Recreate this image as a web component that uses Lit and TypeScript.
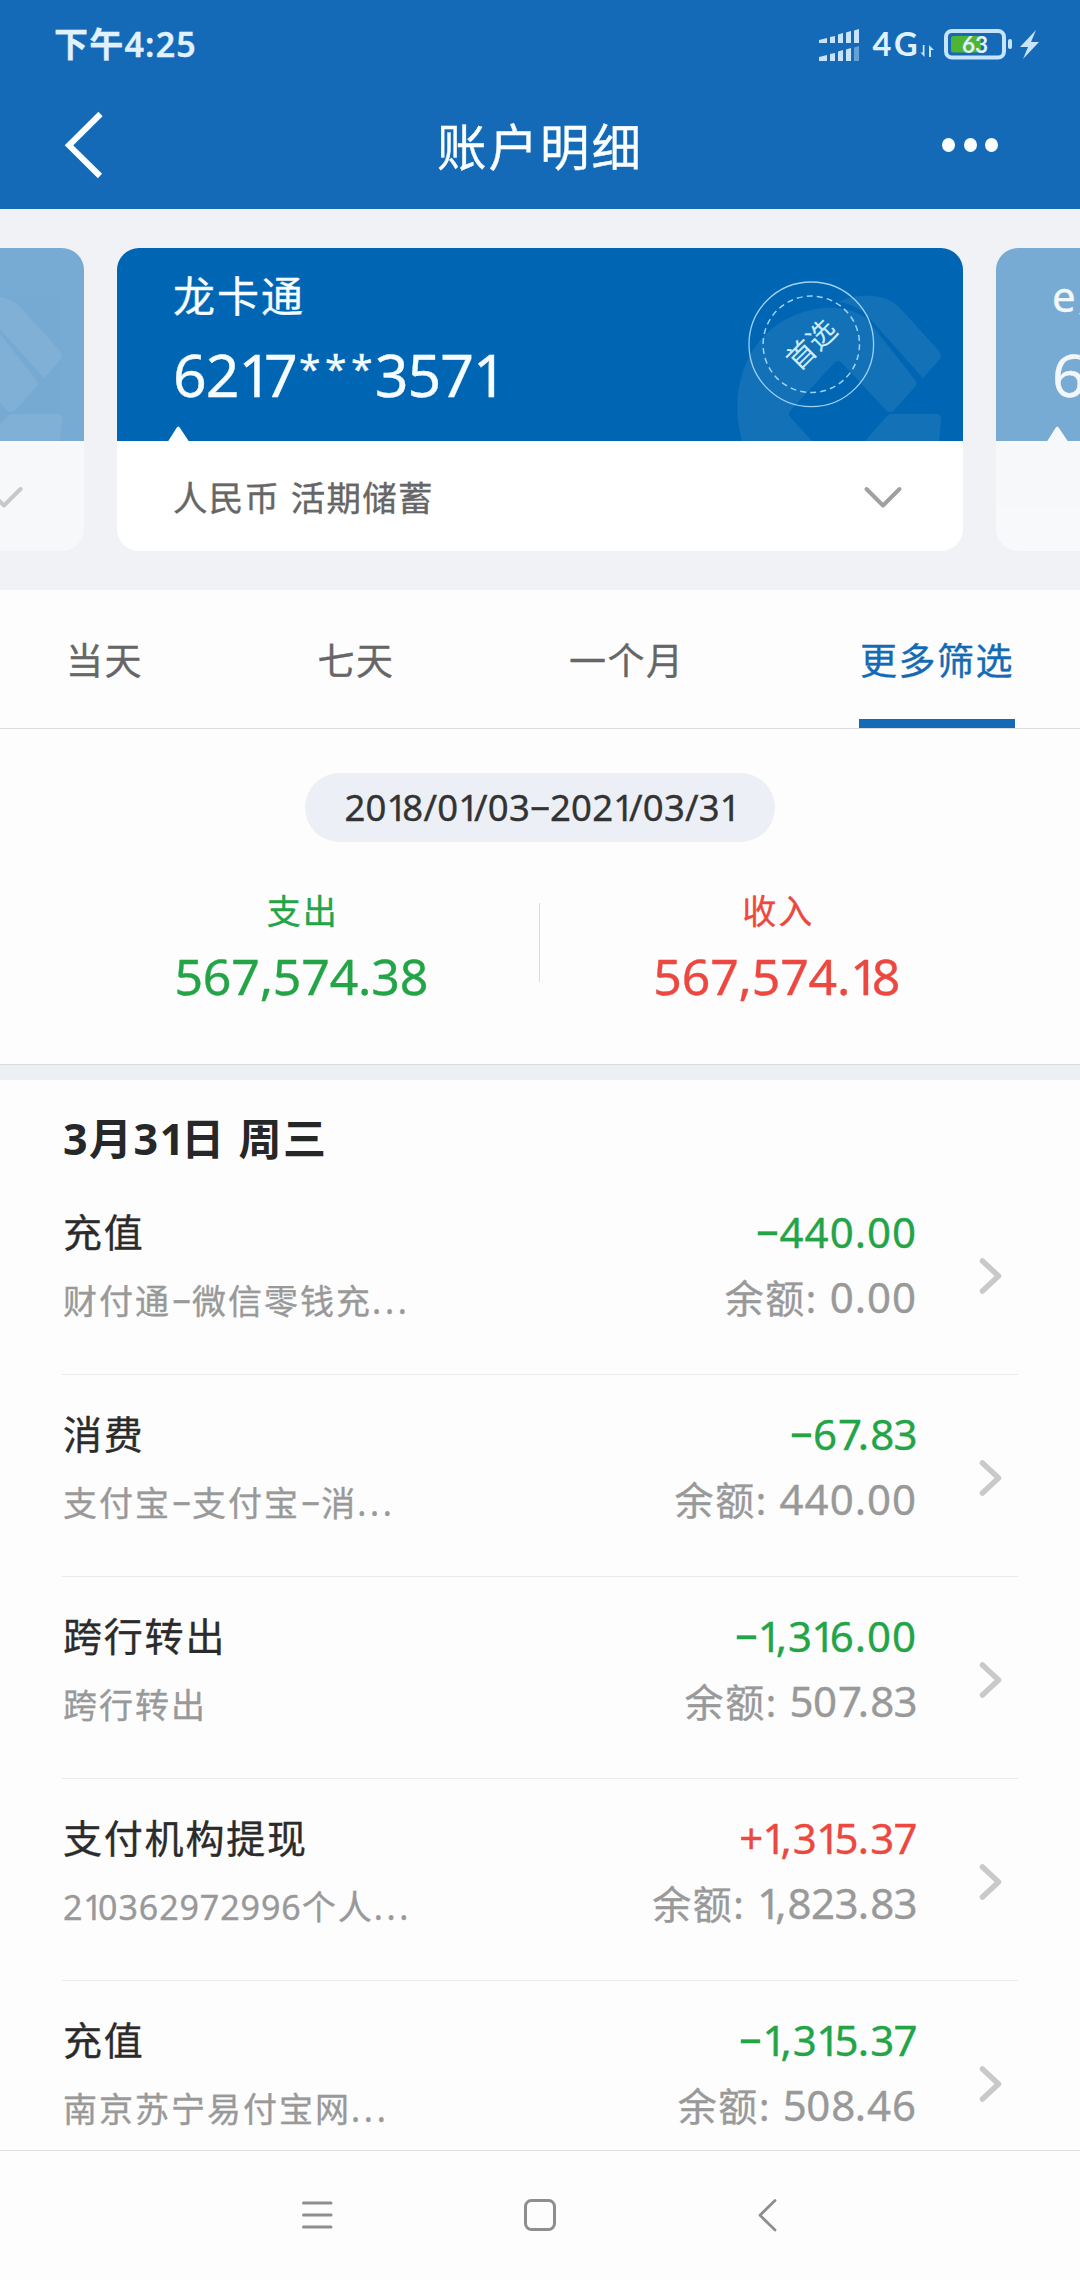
import { LitElement, html, svg, css } from "lit";
import { customElement, property } from "lit/decorators.js";

interface Entry {
  title: string;
  note: string;
  amount: string;
  balance: string;
}

const entries: Entry[] = [
  { title: "充值", note: "财付通-微信零钱充...", amount: "-440.00", balance: "0.00" },
  { title: "消费", note: "支付宝-支付宝-消...", amount: "-67.83", balance: "440.00" },
  { title: "跨行转出", note: "跨行转出", amount: "-1,316.00", balance: "507.83" },
  { title: "支付机构提现", note: "210362972996个人...", amount: "+1,315.37", balance: "1,823.83" },
  { title: "充值", note: "南京苏宁易付宝网...", amount: "-1,315.37", balance: "508.46" },
];

const glyphClass: Record<string, string> = { "1": "one", "-": "dash", "+": "plus", "*": "star", "...": "dots" };

function classOf(part: string, next: string) {
  if (glyphClass[part]) return glyphClass[part];
  if (part === "7" && /^[.,]/.test(next)) return "seven";
  if (/^[23578]$/.test(part)) return "slim";
  return /^\d$/.test(part) ? "digit" : "";
}

/** Splits a string so that each kind of figure, sign, star and ellipsis can be spaced on its own. */
function figures(text: string) {
  const parts = text.split(/(\d|-|\+|\*|\.\.\.)/).filter((part) => part !== "");
  return parts.map((part, i) => {
    const name = classOf(part, parts[i + 1] ?? "");
    return name ? html`<span class=${name}>${part}</span>` : part;
  });
}

const figureStyles = css`
  .one {
    letter-spacing: -0.14em;
  }
  .dash {
    display: inline-block;
    width: 0.55em;
    letter-spacing: 0;
    text-align: center;
    transform: translateY(-0.08em) scaleX(1.85);
  }
  .plus {
    letter-spacing: -0.02em;
  }
  .star {
    display: inline-block;
    width: 26px;
    letter-spacing: 0;
    font-size: 0.66em;
    text-align: center;
    transform: translateY(-0.36em);
  }
  .dots {
    letter-spacing: 0.11em;
  }
`;

@customElement("status-bar")
class StatusBar extends LitElement {
  static styles = css`
    :host {
      display: flex;
      justify-content: space-between;
      height: 88px;
      padding: 0 40px 0 54px;
      color: #e2f1ff;
      font-weight: 600;
    }
    .time {
      font-size: 34px;
      line-height: 88px;
      letter-spacing: 1.200px;
    }
    .icons {
      display: block;
      width: 224px;
      height: 88px;
    }
    text {
      font-family: Lato, "Noto Sans", sans-serif;
      font-weight: 700;
      fill: #e2f1ff;
    }
  `;

  render() {
    return html`
      <div class="time">下午4:25</div>
      <svg class="icons" viewBox="816 0 224 88">
        <g fill="#c8e3fc">
          <path d="M819 40l8-2v5h-8zM830 37l5-1v7h-5zM838 34.500l5-1.500v10h-5zM846 32.500l5-1.500v12h-5zM854 30.500l5-1.500v14h-5z" />
          <path d="M819 57l8-2v6h-8zM830 54l5-1v8h-5zM838 51.500l5-1.500v11h-5zM846 49.500l5-1.500v13h-5z" />
          <path d="M854 47.500l5-1.500v15h-5z" opacity=".45" />
          <path d="M924.500 45v12l-4-4.500h2.300v-7.500zM929 57v-12l5 5h-3v7z" />
          <rect x="1008" y="39" width="4" height="10" rx="2" />
          <path d="M1036 30l-16 17h8l-5 12l16-17h-8z" />
        </g>
        <text x="872.500" y="56" font-size="32.500" textLength="45">4G</text>
        <rect x="951" y="36" width="30" height="16.500" rx="2.500" fill="#4db533" />
        <rect x="946" y="31" width="58" height="26.500" rx="6" fill="none" stroke="#c8e3fc" stroke-width="4" />
        <text x="962" y="53" font-size="22.500" textLength="26">63</text>
      </svg>
    `;
  }
}

@customElement("title-bar")
class TitleBar extends LitElement {
  static styles = css`
    :host {
      display: grid;
      grid-template-columns: 120px 1fr 120px;
      align-items: center;
      height: 121px;
      color: #fbfeff;
    }
    .heading {
      font-size: 49.500px;
      line-height: 60px;
      letter-spacing: 2px;
      text-align: center;
      padding-bottom: 4px;
    }
    svg {
      display: block;
      width: 120px;
      height: 121px;
    }
  `;

  render() {
    return html`
      <svg viewBox="0 88 120 121">
        <path d="M100.500 114L69 145.300L100 176" fill="none" stroke="#fbfeff" stroke-width="6" />
      </svg>
      <div class="heading">账户明细</div>
      <svg viewBox="960 88 120 121" overflow="visible">
        <g fill="#fbfeff">
          <ellipse cx="948.500" cy="145" rx="6.500" ry="6.900" />
          <ellipse cx="970.500" cy="145" rx="6.500" ry="6.900" />
          <ellipse cx="991.500" cy="145" rx="6.500" ry="6.900" />
        </g>
      </svg>
    `;
  }
}

@customElement("account-card")
class AccountCard extends LitElement {
  @property() name = "";
  @property() number = "";
  @property() kind = "";
  @property({ type: Boolean }) preferred = false;

  static styles = [
    figureStyles,
    css`
      :host {
        display: block;
        flex: none;
        width: 846px;
        height: 303px;
        border-radius: 22px;
        overflow: hidden;
        background: #fff;
      }
      .face {
        position: relative;
        height: 193px;
        box-sizing: border-box;
        padding: 16px 0 0 56px;
        background: #0066b3;
        color: #f6fcff;
      }
      .art {
        position: absolute;
        left: 0;
        top: 0;
        width: 846px;
        height: 193px;
      }
      .name,
      .number {
        position: relative;
        white-space: nowrap;
      }
      .name {
        font-size: 42px;
        line-height: 64px;
        letter-spacing: 2px;
      }
      .number {
        font-size: 59px;
        line-height: 92px;
        letter-spacing: -1px;
      }
      .detail {
        display: flex;
        justify-content: space-between;
        align-items: center;
        height: 109px;
        padding: 0 60px 0 56px;
        color: #666;
        font-size: 34.500px;
        letter-spacing: 1.300px;
      }
      .chevron {
        width: 40px;
        height: 26px;
        margin-top: 3px;
      }
      .stamp {
        font-size: 28.500px;
        fill: #c9ecff;
        -webkit-text-stroke: 0;
      }
    `,
  ];

  render() {
    return html`
      <div class="face">
        <svg class="art" viewBox="117 248 846 193">
          <g fill="#fff" opacity=".075">
            <path
              d="M742 441C730 398 742 357 767 333C792 309 834 300 861 315C866 318 870 323 874 328L915 380Q918 384 915 387L894 410Q890 414 886 410L842 363Q838 359 834 363L790 411Q788 414 790 417L812 441Z"
            />
            <path
              d="M839 302C850 295 878 292 894 303C900 307 904 313 909 318L939 351Q943 356 939 360L923 378L872 321C864 311 854 304 839 302Z"
            />
            <path d="M887 416Q889 414 892 414H936Q941 414 941 419L939 441H865Z" />
          </g>
          ${this.preferred
            ? svg`
              <circle cx="811.300" cy="344.300" r="62.300" fill="none" stroke="#9fd2f5" stroke-width="1.300" />
              <circle cx="811.300" cy="344.300" r="48.200" fill="none" stroke="#9fd2f5" stroke-width="1.500" stroke-dasharray="6 4.100" />
              <text class="stamp" x="0" y="10.500" text-anchor="middle" transform="translate(811.300 344.500) rotate(-45)">首选</text>`
            : ""}
          <path d="M168 441.500L176.500 428Q178.300 425 180 428L189 441.500Z" fill="#fff" />
        </svg>
        <div class="name">${this.name}</div>
        <div class="number">${figures(this.number)}</div>
      </div>
      <div class="detail">
        <span>${this.kind}</span>
        <svg class="chevron" viewBox="863 484 40 26">
          <path d="M866.500 489L883 505.500L899.500 489" fill="none" stroke="#a0a0a0" stroke-width="4" stroke-linecap="round" stroke-linejoin="round" />
        </svg>
      </div>
    `;
  }
}

@customElement("filter-tabs")
class FilterTabs extends LitElement {
  static styles = css`
    :host {
      display: flex;
      justify-content: space-between;
      height: 138px;
      padding: 0 65px 0 66px;
      border-bottom: 1px solid #d9dbdd;
      color: #666;
      font-size: 37px;
      letter-spacing: 1.500px;
    }
    .tab {
      box-sizing: border-box;
      line-height: 141px;
      height: 138px;
      white-space: nowrap;
    }
    .active {
      color: #146ab4;
      padding: 0 1px;
      border-bottom: 9px solid #146ab4;
    }
  `;

  render() {
    return html`
      <div class="tab">当天</div>
      <div class="tab">七天</div>
      <div class="tab">一个月</div>
      <div class="tab active">更多筛选</div>
    `;
  }
}

@customElement("period-summary")
class PeriodSummary extends LitElement {
  static styles = [
    figureStyles,
    css`
      :host {
        display: flex;
        flex-direction: column;
        align-items: center;
        box-sizing: border-box;
        height: 351px;
        padding-top: 44px;
        border-bottom: 15px solid #ecf0f5;
        box-shadow: inset 0 -1px #d9dbdd;
      }
      .period {
        width: 470px;
        height: 69px;
        border-radius: 35px;
        background: #eceff5;
        color: #333;
        font-size: 36.500px;
        line-height: 69px;
        text-align: center;
        letter-spacing: 0.2px;
        white-space: nowrap;
      }
      .totals {
        display: flex;
        align-items: flex-start;
        width: 952px;
        margin-top: 43px;
      }
      .total {
        flex: 1;
        text-align: center;
      }
      .label {
        font-size: 34px;
        line-height: 52px;
        letter-spacing: 2px;
        padding-left: 3px;
      }
      .sum {
        font-size: 50px;
        line-height: 79px;
        letter-spacing: -0.2px;
      }
      .out {
        color: #22a447;
      }
      .in {
        color: #ec4840;
        padding-right: 2px;
      }
      .rule {
        width: 1px;
        height: 79px;
        margin: 18px 0 0;
        background: #dcdcdc;
      }
    `,
  ];

  render() {
    return html`
      <div class="period">${figures("2018/01/03-2021/03/31")}</div>
      <div class="totals">
        <div class="total out">
          <div class="label">支出</div>
          <div class="sum">567,574.38</div>
        </div>
        <div class="rule"></div>
        <div class="total in">
          <div class="label">收入</div>
          <div class="sum">${figures("567,574.18")}</div>
        </div>
      </div>
    `;
  }
}

@customElement("entry-row")
class EntryRow extends LitElement {
  @property({ attribute: false }) entry!: Entry;

  static styles = [
    figureStyles,
    css`
      :host {
        display: flex;
        box-sizing: border-box;
        height: 202px;
        margin: 0 62px;
        padding: 31px 14px 0 1px;
        border-bottom: 1px solid #ebebeb;
        white-space: nowrap;
      }
      .what {
        flex: 1;
      }
      .title {
        color: #2b2b2b;
        font-size: 39px;
        line-height: 56px;
        letter-spacing: 1.800px;
      }
      .note {
        padding-top: 20px;
        color: #999;
        font-size: 34px;
        line-height: 42px;
        letter-spacing: 2px;
      }
      .note .dash {
        width: 0.62em;
      }
      .note .digit,
      .note .slim {
        letter-spacing: 0.9px;
      }
      .money {
        text-align: right;
        font-size: 42px;
        letter-spacing: 1px;
      }
      .money .slim {
        letter-spacing: -0.6px;
      }
      .money .seven {
        letter-spacing: -0.1em;
      }
      .amount {
        color: #22a447;
        line-height: 55px;
      }
      .amount.in {
        color: #ec4840;
      }
      .balance {
        padding-top: 10px;
        color: #999;
        line-height: 56px;
      }
      .caption {
        font-size: 39px;
        letter-spacing: 1.600px;
      }
      .chevron {
        width: 26px;
        height: 40px;
        margin: 52px 0 0 61px;
      }
    `,
  ];

  render() {
    const { title, note, amount, balance } = this.entry;
    return html`
      <div class="what">
        <div class="title">${title}</div>
        <div class="note">${figures(note)}</div>
      </div>
      <div class="money">
        <div class="amount ${amount.startsWith("+") ? "in" : ""}">${figures(amount)}</div>
        <div class="balance"><span class="caption">余额: </span>${figures(balance)}</div>
      </div>
      <svg class="chevron" viewBox="978 1255.500 26 40">
        <path d="M982.500 1260.500L998.500 1275.500L982.500 1290.500" fill="none" stroke="#c9c9c9" stroke-width="5.500" stroke-linecap="round" stroke-linejoin="round" />
      </svg>
    `;
  }
}

@customElement("system-nav")
class SystemNav extends LitElement {
  static styles = css`
    :host {
      display: block;
      height: 129px;
      border-top: 1px solid #e0e0e0;
      background: #fdfdfd;
    }
    svg {
      display: block;
      width: 1080px;
      height: 129px;
    }
  `;

  render() {
    return html`
      <svg viewBox="0 2151 1080 129" fill="none" stroke="#8e8e8e" stroke-width="3" stroke-linecap="round" stroke-linejoin="round">
        <path d="M303.500 2203H331M303.500 2215H331M303.500 2227H331" />
        <rect x="525.500" y="2200.500" width="29" height="29" rx="6" />
        <path d="M775 2200.500L760 2215.200L775 2230" stroke-width="2.800" />
      </svg>
    `;
  }
}

@customElement("app-root")
class AppRoot extends LitElement {
  static styles = [
    figureStyles,
    css`
      :host {
        display: flex;
        flex-direction: column;
        width: 1080px;
        height: 2280px;
        overflow: hidden;
        background: #fdfdfd;
        font-family: "Noto Sans", "Noto Sans CJK SC", sans-serif;
        font-weight: 400;
        -webkit-text-stroke: 0.35px;
      }
      .top {
        background: #146ab6;
      }
      .cards {
        display: flex;
        justify-content: center;
        gap: 33px;
        padding: 39px 0;
        background: #f0f2f6;
        overflow: hidden;
      }
      .side {
        opacity: 0.5;
      }
      .day {
        height: 93px;
        flex: none;
        padding-left: 63px;
        color: #262729;
        font-size: 43px;
        font-weight: 700;
        line-height: 117px;
        letter-spacing: 1.500px;
        -webkit-text-stroke: 0;
      }
      .day .one {
        letter-spacing: -0.07em;
      }
      .list {
        flex: 1;
        min-height: 0;
        overflow: hidden;
      }
      system-nav {
        flex: none;
      }
    `,
  ];

  render() {
    return html`
      <div class="top">
        <status-bar></status-bar>
        <title-bar></title-bar>
      </div>
      <div class="cards">
        <account-card class="side"></account-card>
        <account-card preferred name="龙卡通" number="6217***3571" kind="人民币 活期储蓄"></account-card>
        <account-card class="side" name="e账户" number="6217"></account-card>
      </div>
      <filter-tabs></filter-tabs>
      <period-summary></period-summary>
      <div class="day">${figures("3月31日 周三")}</div>
      <div class="list">${entries.map((entry) => html`<entry-row .entry=${entry}></entry-row>`)}</div>
      <system-nav></system-nav>
    `;
  }
}
